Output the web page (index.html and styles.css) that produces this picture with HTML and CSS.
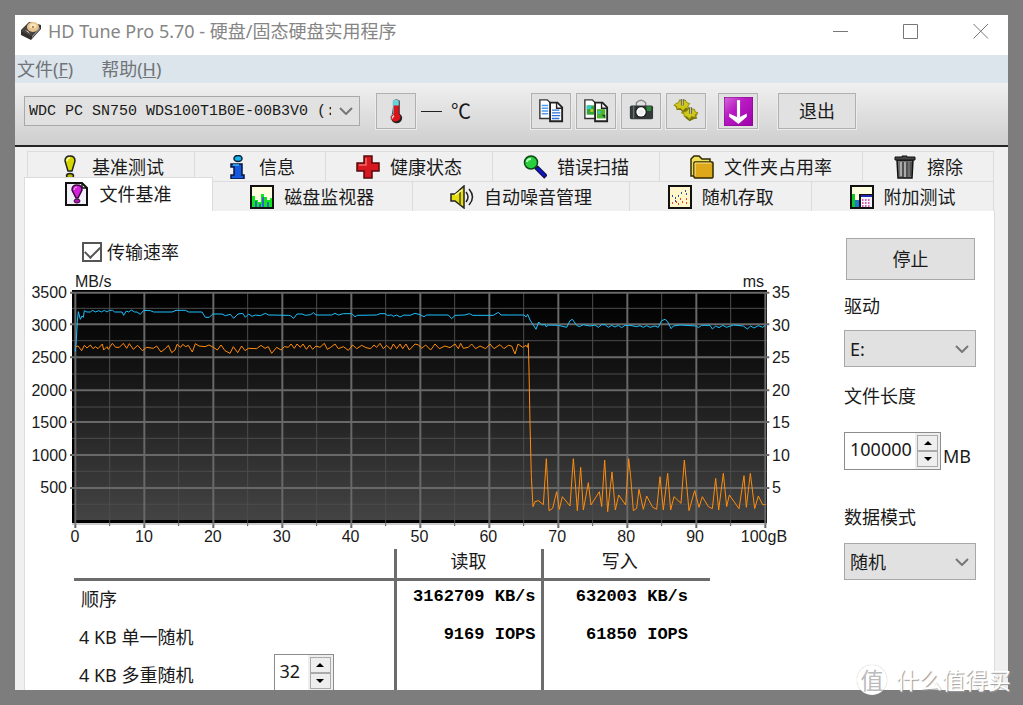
FILE: index.html
```html
<!DOCTYPE html>
<html lang="zh-CN">
<head>
<meta charset="utf-8">
<title>HD Tune Pro 5.70</title>
<link rel="stylesheet" href="styles.css">
</head>
<body>
<div class="window">
  <header class="titlebar">
    <svg class="app-icon" viewBox="0 0 22 20" aria-hidden="true">
      <path d="M9 1 21 4 21 8 11 19 1 14 1 9Z" fill="#33302e"/>
      <path d="M10 1 20 4 11 15 1 10Z" fill="#4d4640"/>
      <ellipse cx="13" cy="6" rx="6" ry="5" fill="#e9c48a"/>
      <ellipse cx="13" cy="5" rx="3.500" ry="2.500" fill="#f7e3bd"/>
      <circle cx="13" cy="6" r="1" fill="#8c7350"/>
      <path d="M5 9 10 13 8 10Z" fill="#d8d4d4"/>
      <path d="M12 15 20 6 20 8 12 17Z" fill="#8d8892"/>
    </svg>
    <h1 class="title">HD Tune Pro 5.70 - 硬盘/固态硬盘实用程序</h1>
    <div class="window-controls">
      <button class="window-button" aria-label="最小化"><svg viewBox="0 0 16 16"><path d="M0 8.500H15"/></svg></button>
      <button class="window-button" aria-label="最大化"><svg viewBox="0 0 16 16"><path d="M.5 1.500H14.500V15.500H.5Z"/></svg></button>
      <button class="window-button" aria-label="关闭"><svg viewBox="0 0 16 16"><path d="M.5 1 15 15.500M15 1 .5 15.500"/></svg></button>
    </div>
  </header>

  <nav class="menubar">
    <button class="menu-item">文件(<u>F</u>)</button>
    <button class="menu-item">帮助(<u>H</u>)</button>
  </nav>

  <div class="toolbar">
    <div class="select-box drive-select">
      <select aria-label="磁盘"><option>WDC PC SN750 WDS100T1B0E-00B3V0 (:</option></select>
      <svg class="chevron" viewBox="0 0 14 8"><path d="M1 1 7 7 13 1"/></svg>
    </div>
    <button class="tool-button" aria-label="温度">
      <svg class="tool-icon" viewBox="0 0 28 28">
        <path d="M12 3Q14 0 18 3V17Q22 20 20 24 18 28 13 27 9 26 9 21Z" fill="#222"/>
        <path d="M11 3Q14 0 17 3V17Q20 20 18 23 16 26 12 25 8 24 8 20 9 18 11 17Z" fill="#d9141b"/>
        <path d="M11 3Q14 0 17 3V8H11Z" fill="#5fd9e0"/>
        <path d="M11 3V17Q7 19 8 23" fill="none" stroke="#74c9cc"/>
        <path d="M12 19Q10 20 10 22" fill="none" stroke="#ffd5d5" stroke-width="1.500"/>
      </svg>
    </button>
    <output class="temperature"><span class="dash"></span>℃</output>
    <div class="tool-group">
      <button class="tool-button" aria-label="复制文本">
        <svg class="tool-icon" viewBox="0 0 28 28">
          <path d="M2 2H10L14 6V22H2Z" fill="#fff" stroke="#333" stroke-width="1.500"/>
          <path d="M4 8H11M4 11H11M4 14H11M4 17H11" stroke="#4f9df0" stroke-width="1.500"/>
          <path d="M13 5H21L26 10V25H13Z" fill="#fff" stroke="#222" stroke-width="2"/>
          <path d="M20 5V11H26" fill="none" stroke="#222" stroke-width="1.500"/>
          <path d="M15 13H23M15 16H24M15 19H24M15 22H23" stroke="#2f72d8" stroke-width="1.500"/>
        </svg>
      </button>
      <button class="tool-button" aria-label="复制图像">
        <svg class="tool-icon" viewBox="0 0 28 28">
          <path d="M2 2H10L14 6V22H2Z" fill="#fff" stroke="#333" stroke-width="1.500"/>
          <path d="M4 8H12V18H4Z" fill="#37a336"/><path d="M4 8H9V12H4Z" fill="#35c7ca"/><path d="M8 12H11V15H8Z" fill="#c4c928"/>
          <path d="M13 5H21L26 10V25H13Z" fill="#fff" stroke="#222" stroke-width="2"/>
          <path d="M20 5V11H26" fill="none" stroke="#222" stroke-width="1.500"/>
          <path d="M15 12H24V22H15Z" fill="#4ab52d"/><path d="M16 14H19V17H16Z" fill="#42c2c0"/><path d="M20 18H24V22Z" fill="#164f1b"/>
        </svg>
      </button>
      <button class="tool-button" aria-label="截图">
        <svg class="tool-icon" viewBox="0 0 28 28">
          <path d="M9 9V5Q14 0 19 5V9" fill="none" stroke="#888" stroke-width="1.500"/>
          <rect x="2" y="8" width="25" height="15" rx="2" fill="#33383a"/>
          <path d="M6 9V22" stroke="#6c7173" stroke-width="1.500"/>
          <path d="M20 9H25V14H20Z" fill="#2a8a35"/>
          <circle cx="14" cy="15" r="6.500" fill="#222"/><circle cx="14" cy="15" r="5" fill="#fff"/><circle cx="14" cy="15" r="3" fill="#eceef0"/>
        </svg>
      </button>
      <button class="tool-button" aria-label="选项">
        <svg class="tool-icon" viewBox="0 0 28 28">
          <path d="M2 9 4 11 4 13 8 13 11 16 14 14 18 13 17 10 15 9Z" fill="#77710a"/>
          <path d="M12 19 14 22 18 25 22 23 26 22 25 19 27 17Z" fill="#77710a"/>
          <g fill="#d0c818" stroke="#8d860d">
            <path d="M3 6 6 5 7 2 10 3 13 2 15 5 18 6 16 9 17 11 13 11 11 14 8 11 4 12 4 9 1 8Z"/>
            <path d="M12 15 15 14 17 11 20 12 23 12 24 15 27 16 24 18 24 21 20 20 18 23 15 20 12 20 12 17 9 16Z"/>
          </g>
          <path d="M10 8V1M19 17V10" stroke="#5d5c42" stroke-width="3"/>
          <path d="M10 8V1M19 17V10" stroke="#dadac8"/>
        </svg>
      </button>
    </div>
    <button class="tool-button" aria-label="保存">
      <svg class="save-icon" viewBox="0 0 28 28">
        <defs><linearGradient id="save-fill" x1="0" y1="0" x2="1" y2="1"><stop offset="0" stop-color="#d56ada"/><stop offset=".4" stop-color="#b81bc2"/><stop offset="1" stop-color="#9d00a8"/></linearGradient></defs>
        <rect x="0" y="0" width="28" height="28" rx="2" fill="url(#save-fill)" stroke="#7c0a86"/>
        <path d="M14 3V20" stroke="#fff" stroke-width="3"/>
        <path d="M5 16 14 20 22 16V19L14 26 5 19Z" fill="#fff"/>
      </svg>
    </button>
    <button class="tool-button exit-button">退出</button>
  </div>

  <main class="workspace">
    <div class="tabs" role="tablist">
      <div class="tab-row tab-row-back">
        <button class="tab" role="tab">
          <svg class="tab-icon" viewBox="0 0 24 24"><path d="M7 6Q7 1 12 1T17 6L14 16H10Z" fill="#d6d600" stroke="#222" stroke-width="1.500"/><path d="M9 6Q9 3 12 3" fill="none" stroke="#ffffb0" stroke-width="1.500"/><ellipse cx="12" cy="21" rx="3.500" ry="2.500" fill="#b8b800" stroke="#222" stroke-width="1.500"/></svg>
          基准测试</button>
        <button class="tab" role="tab">
          <svg class="tab-icon" viewBox="0 0 24 24"><ellipse cx="13" cy="3.500" rx="4" ry="3" fill="#19b4ee" stroke="#06233d" stroke-width="1.500"/><path d="M6 9H17V20H19V24H6V20H9V12H6Z" fill="#1458e0" stroke="#06153d" stroke-width="1.500"/><path d="M8 10H14" stroke="#37b8f2" stroke-width="1.500"/></svg>
          信息</button>
        <button class="tab" role="tab">
          <svg class="tab-icon" viewBox="0 0 24 24"><path d="M8 1H16V8H23V16H16V23H8V16H1V8H8Z" fill="#d7191f" stroke="#550a0c" stroke-width="1.500"/><path d="M10 3V10H3" fill="none" stroke="#f46b6b" stroke-width="1.500"/></svg>
          健康状态</button>
        <button class="tab" role="tab">
          <svg class="tab-icon" viewBox="0 0 24 24"><path d="M13 12 23 22" stroke="#10104c" stroke-width="5"/><path d="M14 13 22 21" stroke="#1212c8" stroke-width="2.500"/><circle cx="8" cy="7.500" r="6.500" fill="#29cf3c" stroke="#0c4718" stroke-width="1.500"/><path d="M4 7Q4 4 8 4" fill="none" stroke="#b8ffbe" stroke-width="2"/></svg>
          错误扫描</button>
        <button class="tab" role="tab">
          <svg class="tab-icon" viewBox="0 0 24 24"><path d="M1 21V4L4 1H9L12 4H20V21Z" fill="#eee05b" stroke="#302800" stroke-width="1.500"/><rect x="4" y="7" width="19" height="16" rx="1" fill="#dda91a" stroke="#302800" stroke-width="1.500"/><path d="M5 21V8H21" fill="none" stroke="#ffe990"/></svg>
          文件夹占用率</button>
        <button class="tab" role="tab">
          <svg class="tab-icon" viewBox="0 0 24 24"><path d="M4 5H20L19 23H5Z" fill="#707070" stroke="#111" stroke-width="1.500"/><path d="M8 7V21M12 7V22" stroke="#aaa" stroke-width="2"/><path d="M10 7V22M14 7V22M18 7V21" stroke="#333"/><path d="M2 2H9V1H14V2H22V5H2Z" fill="#444" stroke="#111"/></svg>
          擦除</button>
      </div>
      <div class="tab-row">
        <button class="tab tab-active" role="tab" aria-selected="true">
          <svg class="tab-icon" viewBox="0 0 24 24"><path d="M1 1H17L22 6V23H1Z" fill="#f2f0f8" stroke="#111" stroke-width="2"/><path d="M17 1V6H22" fill="none" stroke="#111" stroke-width="1.500"/><path d="M7 8Q7 3 12 3T17 8L13 16H11Z" fill="#d420d8" stroke="#3a0a3c" stroke-width="1.500"/><path d="M9 8Q9 5 12 5" fill="none" stroke="#ffa9ff"/><ellipse cx="12" cy="19" rx="3" ry="2" fill="#b315b7" stroke="#3a0a3c"/></svg>
          文件基准</button>
        <button class="tab" role="tab">
          <svg class="tab-icon" viewBox="0 0 24 24"><rect x="1" y="1" width="22" height="22" fill="#fffee0" stroke="#111" stroke-width="2"/><path d="M2 11H5V15H8V17H11V9H14V12H17V15H20V13H22V22H2Z" fill="#10e61e"/><path d="M6 16V22M10 19V22M13 12V22M18 17V22" stroke="#3265c9" stroke-width="2"/></svg>
          磁盘监视器</button>
        <button class="tab" role="tab">
          <svg class="tab-icon" viewBox="0 0 24 24"><path d="M1 9H5L14 1V23L5 16H1Z" fill="#e5df12" stroke="#222" stroke-width="1.500"/><path d="M10 5V19" stroke="#777100" stroke-width="2"/><path d="M5 10 12 5" stroke="#ffffa0" stroke-width="1.500"/><path d="M16 7Q20 12 16 17M19 4Q26 12 19 20" fill="none" stroke="#222" stroke-width="1.500"/></svg>
          自动噪音管理</button>
        <button class="tab" role="tab">
          <svg class="tab-icon" viewBox="0 0 24 24"><rect x="1" y="1" width="22" height="22" fill="#fff7c9" stroke="#111" stroke-width="2"/><path d="M4 11h1M7 13h1M10 11h1M13 8h1M17 6h1M18 9h1M7 16h1" stroke="#2e4fb0" stroke-width="2"/><path d="M4 18h1M8 17h1M12 14h1M14 17h1M18 14h1M10 19h1M18 18h1" stroke="#e8472d" stroke-width="2"/></svg>
          随机存取</button>
        <button class="tab" role="tab">
          <svg class="tab-icon" viewBox="0 0 24 24"><rect x="1" y="1" width="22" height="22" fill="#fffee0" stroke="#111" stroke-width="2"/><path d="M2 9H5V22H2Z" fill="#10c923"/><path d="M5 15H9V22H5Z" fill="#2375d4"/><rect x="10" y="10" width="13" height="13" fill="#f4f4ff" stroke="#111" stroke-width="2"/><path d="M11 11H22" stroke="#2525b5" stroke-width="2"/><path d="M12 15H21M12 18H21M12 21H21" stroke="#d5258d" stroke-width="1.500" stroke-dasharray="1.500 1.500"/></svg>
          附加测试</button>
      </div>
    </div>

    <section class="panel">
      <div class="results">
        <label class="rate-toggle"><input type="checkbox" checked>传输速率</label>
        <div class="chart">
          <div class="chart-units"><span>MB/s</span><span>ms</span></div>
          <div class="y-axis y-axis-left"><span>3500</span><span>3000</span><span>2500</span><span>2000</span><span>1500</span><span>1000</span><span>500</span><span></span></div>
          <svg class="plot" viewBox="0 0 2085 699" preserveAspectRatio="none" role="img" aria-label="传输速率曲线">
            <defs><linearGradient id="plot-fill" x1="0" y1="0" x2="0" y2="1"><stop offset="0" stop-color="#000"/><stop offset=".25" stop-color="#0d0d0d"/><stop offset="1" stop-color="#444"/></linearGradient></defs>
            <rect width="2085" height="699" fill="#000"/>
            <rect x="9" y="9" width="2070" height="681" fill="url(#plot-fill)"/>
            <path class="grid-minor" d="M0 55H2085M0 152H2085M0 252H2085M0 351H2085M0 445H2085M0 544H2085M0 643H2085M113 9V708M320 9V708M527 9V708M734 9V708M941 9V708M1148 9V708M1355 9V708M1562 9V708M1769 9V708M1976 9V708"/>
            <path class="grid-major" d="M-6 8H2092M-6 103H2092M-6 202H2092M-6 301H2092M-6 396H2092M-6 495H2092M-6 594H2092M10 9V714M217 9V714M424 9V714M631 9V714M838 9V714M1045 9V714M1252 9V714M1459 9V714M1666 9V714M1873 9V714M2080 9V714"/>
            <path class="axis-base" d="M0 702H2085"/>
            <polyline class="series series-read" points="10,185 13,150 16,95 19,65 25,88 30,78 34,82 37,62 45,66 55,66 62,61 70,66 80,62 88,66 97,61 105,66 112,61 122,61 128,66 150,66 155,76 163,63 170,66 178,60 188,66 195,66 205,73 215,61 235,62 245,66 300,66 312,61 340,61 350,66 390,66 400,82 412,82 422,72 450,72 460,77 475,73 485,85 498,72 512,70 520,82 530,72 540,79 550,75 565,77 580,70 590,75 600,75 650,76 655,77 665,85 675,72 690,72 700,76 716,74 724,68 732,75 779,75 789,70 799,75 814,71 839,71 849,80 856,76 914,75 924,71 939,71 946,76 959,75 964,79 974,75 984,81 996,75 1014,76 1029,70 1044,74 1056,80 1064,75 1129,75 1139,86 1149,76 1179,75 1192,71 1202,76 1264,76 1279,67 1287,75 1356,75 1362,81 1367,73 1374,90 1384,105 1392,118 1400,96 1409,105 1419,103 1422,110 1430,105 1459,106 1484,112 1494,92 1501,88 1507,96 1514,106 1522,110 1534,104 1554,108 1569,105 1579,112 1589,104 1599,104 1609,112 1619,106 1629,111 1639,106 1649,113 1659,106 1674,106 1694,110 1704,107 1714,112 1724,107 1734,112 1749,108 1759,112 1769,92 1779,88 1787,95 1792,105 1797,116 1804,108 1824,105 1874,108 1879,113 1889,106 1914,106 1921,117 1931,108 1941,113 1952,106 1964,112 1984,105 2014,108 2026,117 2036,108 2046,114 2059,107 2072,112 2080,106"/>
            <polyline class="series series-write" points="10,170 18,168 29,182 37,166 45,174 55,165 63,176 70,170 78,176 91,162 95,180 105,170 109,178 121,160 131,172 142,172 154,160 164,175 172,161 184,178 197,166 211,182 224,172 244,175 254,168 267,186 281,175 289,166 299,188 309,180 315,163 326,172 332,163 341,170 349,166 361,186 370,161 381,168 399,170 411,165 424,172 436,180 447,165 459,182 474,190 484,170 497,188 509,168 519,182 529,175 554,176 567,166 579,175 589,170 599,190 614,172 627,180 637,170 649,172 657,162 667,175 675,162 685,172 693,162 703,178 713,165 722,178 732,168 744,172 757,160 766,178 776,172 789,162 799,176 814,170 829,181 842,165 854,176 869,166 882,173 896,176 906,165 914,172 924,160 934,176 944,166 956,178 964,162 974,176 984,162 992,176 1002,162 1012,180 1029,162 1040,165 1049,175 1061,165 1076,180 1089,162 1102,176 1119,168 1134,173 1149,162 1159,176 1166,160 1174,175 1189,172 1199,162 1211,176 1224,168 1241,176 1254,162 1266,176 1284,164 1296,176 1309,166 1319,168 1329,192 1338,162 1352,172 1362,166 1366,172 1369,160 1371,240 1374,400 1378,560 1383,650 1389,635 1399,632 1414,644 1423,506 1431,662 1442,655 1454,605 1462,658 1471,620 1494,648 1504,506 1510,580 1516,662 1526,532 1534,660 1549,578 1557,645 1582,605 1589,650 1598,510 1607,665 1620,546 1630,660 1640,615 1661,645 1670,506 1676,560 1684,662 1694,655 1701,598 1714,658 1724,618 1742,652 1754,658 1764,560 1774,660 1787,550 1796,660 1806,620 1827,640 1837,510 1851,662 1868,602 1881,652 1891,620 1909,650 1921,656 1931,565 1940,660 1954,550 1964,650 1972,615 2001,656 2016,557 2023,652 2035,550 2048,656 2059,618 2072,644 2080,644"/>
          </svg>
          <div class="y-axis y-axis-right"><span>35</span><span>30</span><span>25</span><span>20</span><span>15</span><span>10</span><span>5</span><span></span></div>
          <div class="x-axis"><span>0</span><span>10</span><span>20</span><span>30</span><span>40</span><span>50</span><span>60</span><span>70</span><span>80</span><span>90</span><span>100gB</span></div>
        </div>
        <table class="summary">
          <thead><tr><th class="col-name"></th><th scope="col" class="col-read">读取</th><th scope="col" class="col-write">写入</th></tr></thead>
          <tbody>
            <tr><th scope="row" class="row-first">顺序</th><td>3162709 KB/s</td><td>632003 KB/s</td></tr>
            <tr><th scope="row">4 KB 单一随机</th><td>9169 IOPS</td><td>61850 IOPS</td></tr>
            <tr><th scope="row">
              <div class="queue"><label for="queue-depth">4 KB 多重随机</label>
                <div class="spinner spinner-small"><input id="queue-depth" type="number" value="32"><div class="spinner-buttons"><button aria-label="增加"><svg viewBox="0 0 8 4"><path d="M0 4 4 0 8 4Z"/></svg></button><button aria-label="减少"><svg viewBox="0 0 8 4"><path d="M0 0 4 4 8 0Z"/></svg></button></div></div>
              </div></th><td></td><td></td></tr>
          </tbody>
        </table>
      </div>

      <aside class="settings">
        <button class="stop-button">停止</button>
        <div class="field">
          <label for="drive">驱动</label>
          <div class="select-box"><select id="drive"><option>E:</option></select><svg class="chevron" viewBox="0 0 14 8"><path d="M1 1 7 7 13 1"/></svg></div>
        </div>
        <div class="field field-length">
          <label for="length">文件长度</label>
          <div class="length-row">
            <div class="spinner"><input id="length" type="number" value="100000"><div class="spinner-buttons"><button aria-label="增加"><svg viewBox="0 0 8 4"><path d="M0 4 4 0 8 4Z"/></svg></button><button aria-label="减少"><svg viewBox="0 0 8 4"><path d="M0 0 4 4 8 0Z"/></svg></button></div></div>
            <span class="unit">MB</span>
          </div>
        </div>
        <div class="field field-mode">
          <label for="mode">数据模式</label>
          <div class="select-box"><select id="mode"><option>随机</option></select><svg class="chevron" viewBox="0 0 14 8"><path d="M1 1 7 7 13 1"/></svg></div>
        </div>
      </aside>
    </section>
  </main>
</div>
<div class="watermark"><span class="watermark-badge">值</span><span>什么值得买</span></div>
</body>
</html>
```

FILE: styles.css
```css
* {
  box-sizing: border-box;
}

body {
  margin: 0;
  padding: 15px;
  height: 100vh;
  overflow: hidden;
  background: #7d7d7d;
  color: #1a1a1a;
  font: 18px/24px "Noto Sans", "Noto Sans CJK SC", sans-serif;
}

button,
input,
select {
  margin: 0;
  padding: 0;
  border: 0;
  border-radius: 0;
  background: none;
  color: inherit;
  font: inherit;
}

.window {
  display: flex;
  flex-direction: column;
  height: 100%;
  overflow: hidden;
  background: #f0f0f0;
}

/* Title bar and menu */

.titlebar {
  display: flex;
  flex: none;
  align-items: center;
  height: 40px;
  padding: 0 0 8px 5px;
  background: #fff;
}

.app-icon {
  width: 22px;
  height: 20px;
}

.title {
  flex: 1;
  margin: 0 0 0 6px;
  color: #858585;
  font-size: 18px;
  font-weight: 400;
}

.window-controls {
  display: flex;
  gap: 16px;
}

.window-button {
  width: 54px;
  height: 32px;
}

.window-button svg {
  display: block;
  width: 16px;
  height: 16px;
  margin: 0 auto;
  fill: none;
  stroke: #777;
}

.menubar {
  display: flex;
  flex: none;
  gap: 28px;
  height: 28px;
  padding: 0 2px;
  background: #dce4ec;
  color: #707478;
}

/* Toolbar */

.toolbar {
  display: flex;
  flex: none;
  align-items: center;
  height: 64px;
  padding: 0 9px 6px;
  border-bottom: 2px solid #252525;
  background: linear-gradient(#f0f0f0, #cecece);
}

.select-box {
  display: grid;
  align-items: center;
  height: 37px;
  border: 1px solid #a8a8a8;
  background: #e1e1e1;
}

.select-box select,
.select-box .chevron {
  grid-area: 1 / 1;
}

.select-box select {
  width: 100%;
  height: 100%;
  padding: 0 5px;
  appearance: none;
}

.chevron {
  justify-self: end;
  width: 14px;
  height: 8px;
  margin-right: 6px;
  fill: none;
  stroke: #777;
  stroke-width: 2;
  pointer-events: none;
}

.drive-select {
  width: 336px;
  height: 30px;
  margin-right: 16px;
}

.drive-select select {
  padding: 0 28px 0 4px;
  font: 15px "Liberation Mono", monospace;
}

.tool-button {
  display: flex;
  flex: none;
  align-items: center;
  justify-content: center;
  width: 40px;
  height: 36px;
  border: 1px solid #b0b0b0;
  background: #e1e1e1;
  box-shadow: 0 0 0 1px #ececec;
}

.tool-icon {
  width: 26px;
  height: 26px;
}

.save-icon {
  width: 29px;
  height: 29px;
}

.temperature {
  display: flex;
  align-items: center;
  gap: 9px;
  width: 115px;
  padding-left: 5px;
  font-family: "Noto Sans CJK SC", sans-serif;
  font-size: 20px;
}

.dash {
  width: 21px;
  height: 1px;
  background: #222;
}

.tool-group {
  display: flex;
  gap: 5px;
  margin-right: 12px;
}

.exit-button {
  width: 78px;
  margin-left: 20px;
}

/* Tabs */

.workspace {
  display: flex;
  flex: 1;
  flex-direction: column;
  padding: 4px 13px 0 9px;
}

.tab-row {
  display: flex;
  height: 30px;
}

.tab-row-back {
  padding-left: 3px;
}

.tabs {
  padding-right: 1px;
}

.tab {
  display: flex;
  flex: 1 1 auto;
  align-items: center;
  justify-content: center;
  gap: 10px;
  border: solid #dcdcdc;
  border-width: 1px 1px 0 0;
  white-space: nowrap;
}

.tab-row-back .tab:first-child {
  border-left-width: 1px;
}

.tab-icon {
  flex: none;
  width: 24px;
  height: 24px;
}

.tab-active {
  height: 34px;
  margin-top: -4px;
  padding: 0 3px 2px;
  border-left-width: 1px;
  background: #fff;
}

/* Benchmark panel */

.panel {
  display: flex;
  flex: 1;
  gap: 47px;
  padding: 0 18px 0 1px;
  border: solid #dcdcdc;
  border-width: 0 1px;
  background: #fff;
}

.results {
  flex: 1;
  padding-top: 29px;
}

.rate-toggle {
  display: flex;
  align-items: center;
  gap: 5px;
  width: max-content;
  margin-left: 56px;
}

.rate-toggle input {
  display: grid;
  width: 20px;
  height: 20px;
  border: 2px solid #555;
  appearance: none;
}

.rate-toggle input:checked::before {
  place-self: center;
  width: 13px;
  height: 7px;
  border: solid #555;
  border-width: 0 0 2px 2px;
  content: "";
  transform: translateY(-2px) rotate(-45deg);
}

.chart {
  display: grid;
  grid-template-columns: 46px 1fr 30px;
  grid-template-rows: 26px 233px 26px;
  font: 16px/16px "Liberation Sans", Arial, sans-serif;
}

.chart-units {
  display: flex;
  grid-column: 2;
  align-items: flex-end;
  justify-content: space-between;
  padding: 0 3px;
}

.y-axis {
  display: flex;
  grid-row: 2;
  flex-direction: column;
  justify-content: space-between;
  padding: 3px 5px 2px;
}

.y-axis span {
  display: flex;
  align-items: center;
  height: 0;
}

.y-axis-left span {
  justify-content: flex-end;
}

.plot {
  grid-row: 2;
  grid-column: 2;
  width: 100%;
  height: 100%;
  overflow: visible;
}

.plot path,
.plot polyline {
  fill: none;
  vector-effect: non-scaling-stroke;
}

.grid-minor {
  stroke: #4c4c4c;
}

.grid-major {
  stroke: #686868;
  stroke-width: 2;
}

.axis-base {
  stroke: #999;
}

.series {
  stroke-width: 1;
}

.series-read {
  stroke: #1cc0fc;
}

.series-write {
  stroke: #ff8c0c;
}

.x-axis {
  display: flex;
  grid-column: 2;
  justify-content: space-between;
  padding: 6px 3px 0;
}

.x-axis span {
  display: flex;
  justify-content: center;
  width: 0;
}

/* Result table */

.summary {
  width: 636px;
  margin-left: 48px;
  border-collapse: collapse;
  table-layout: fixed;
}

.summary th {
  padding: 0;
  font-weight: 400;
}

.summary thead th {
  height: 30px;
  padding-bottom: 4px;
  border-bottom: 3px solid #6c6c6c;
}

.summary .col-read,
.summary td:nth-child(2) {
  width: 147px;
  border-right: 3px solid #6c6c6c;
  border-left: 3px solid #6c6c6c;
}

.summary .col-write {
  width: 168px;
  padding-right: 14px;
}

.summary tbody th {
  height: 38px;
  padding-left: 5px;
  text-align: left;
}

.summary tbody .row-first {
  height: 39px;
  padding-left: 7px;
}

.summary td {
  padding: 0 5px 5px 0;
  color: #000;
  font: bold 17px/24px "Liberation Mono", monospace;
  text-align: right;
  white-space: nowrap;
}

.summary td:last-child {
  padding-right: 22px;
}

.queue {
  display: flex;
  align-items: center;
  justify-content: space-between;
  height: 38px;
  padding-right: 60px;
}

/* Number boxes */

.spinner {
  display: flex;
  width: 97px;
  height: 38px;
  border: 1px solid #8c8c8c;
  background: #fff;
}

.spinner input {
  flex: 1;
  min-width: 0;
  padding: 0 0 4px 5px;
  appearance: textfield;
}

.spinner input::-webkit-inner-spin-button {
  display: none;
}

.spinner-buttons {
  display: flex;
  flex: none;
  flex-direction: column;
  width: 25px;
  padding: 2px;
  background: #eee;
}

.spinner-buttons button {
  display: grid;
  flex: 1;
  place-items: center;
  border: 1px solid #aaa;
}

.spinner-buttons svg {
  width: 8px;
  height: 4px;
}

.spinner-small {
  width: 60px;
  margin-bottom: 4px;
}

/* Settings column */

.settings {
  flex: none;
  width: 132px;
  padding-top: 27px;
}

.stop-button {
  width: 129px;
  height: 42px;
  margin: 0 1px 14px 2px;
  border: 1px solid #a8a8a8;
  background: #e1e1e1;
}

.field {
  display: flex;
  flex-direction: column;
  gap: 12px;
  margin-bottom: 17px;
}

.field-length {
  gap: 24px;
  margin-bottom: 35px;
}

.field-mode {
  gap: 14px;
}

.length-row {
  display: flex;
  align-items: flex-end;
  gap: 2px;
}

.unit {
  padding-bottom: 2px;
}

/* Watermark */

.watermark {
  position: absolute;
  right: 12px;
  bottom: 10px;
  display: flex;
  align-items: center;
  gap: 9px;
  color: #fff;
  font-size: 23px;
  line-height: 30px;
  text-shadow: 1px 1px 1px #999;
}

.watermark-badge {
  width: 30px;
  height: 30px;
  border-radius: 50%;
  background: #fff;
  box-shadow: 0 0 1px #aaa;
  color: #bbb;
  text-align: center;
  text-shadow: none;
}
```
